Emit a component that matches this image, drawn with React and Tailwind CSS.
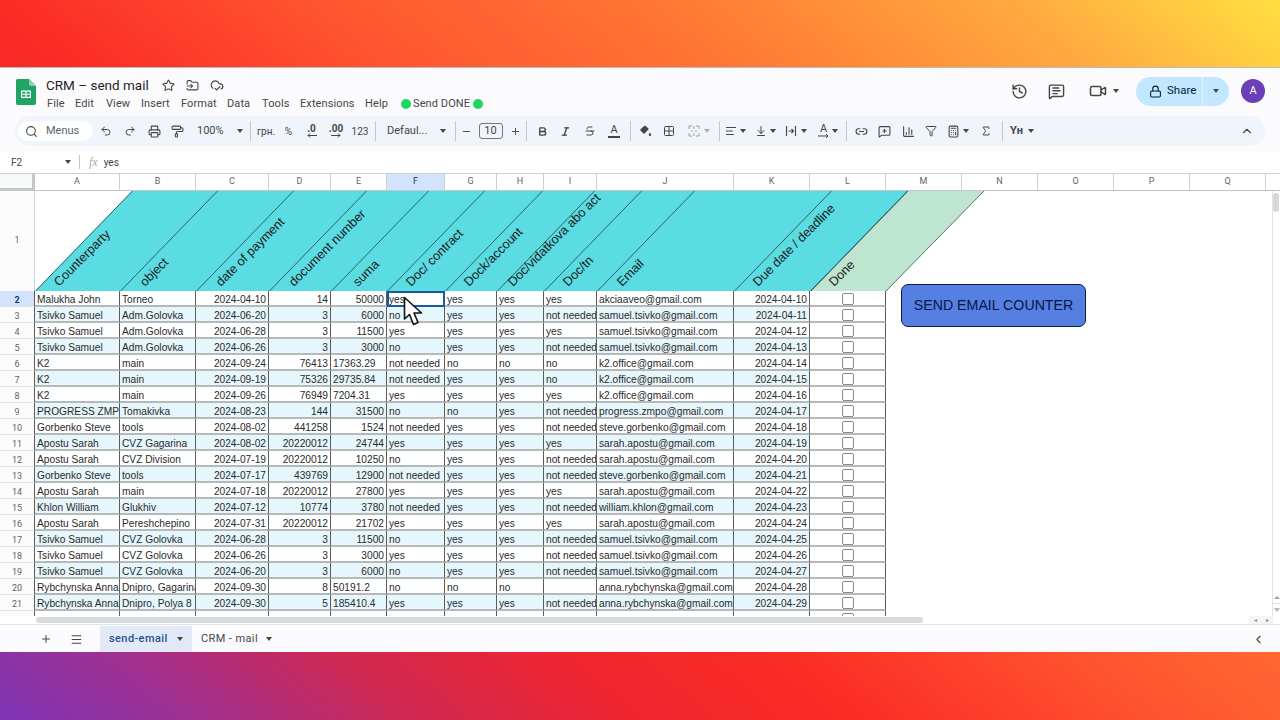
import React from "react";
import {
  Search, Undo2, Redo2, Printer, PaintRoller, Minus, Plus, Bold, Italic, Strikethrough,
  Grid2x2, AlignLeft, ArrowDownToLine, Link2, MessageSquarePlus, ChartColumn,
  Filter, Calculator, Sigma, ChevronUp, ChevronLeft, History, MessageSquareText, Video, Lock,
  Star, FolderInput, CloudCheck, Menu,
} from "lucide-react";

const sampleRows = [
  ["Malukha John", "Torneo", "2024-04-10", "14", "50000", "yes", "yes", "yes", "yes", "akciaaveo@gmail.com", "2024-04-10"],
  ["Tsivko Samuel", "Adm.Golovka", "2024-06-20", "3", "6000", "no", "yes", "yes", "not needed", "samuel.tsivko@gmail.com", "2024-04-11"],
  ["Tsivko Samuel", "Adm.Golovka", "2024-06-28", "3", "11500", "yes", "yes", "yes", "yes", "samuel.tsivko@gmail.com", "2024-04-12"],
  ["Tsivko Samuel", "Adm.Golovka", "2024-06-26", "3", "3000", "no", "yes", "yes", "not needed", "samuel.tsivko@gmail.com", "2024-04-13"],
  ["K2", "main", "2024-09-24", "76413", "17363.29", "not needed", "no", "no", "no", "k2.office@gmail.com", "2024-04-14"],
  ["K2", "main", "2024-09-19", "75326", "29735.84", "not needed", "yes", "yes", "no", "k2.office@gmail.com", "2024-04-15"],
  ["K2", "main", "2024-09-26", "76949", "7204.31", "yes", "yes", "yes", "yes", "k2.office@gmail.com", "2024-04-16"],
  ["PROGRESS ZMPO", "Tomakivka", "2024-08-23", "144", "31500", "no", "no", "yes", "not needed", "progress.zmpo@gmail.com", "2024-04-17"],
  ["Gorbenko Steve", "tools", "2024-08-02", "441258", "1524", "not needed", "yes", "yes", "not needed", "steve.gorbenko@gmail.com", "2024-04-18"],
  ["Apostu Sarah", "CVZ Gagarina", "2024-08-02", "20220012", "24744", "yes", "yes", "yes", "yes", "sarah.apostu@gmail.com", "2024-04-19"],
  ["Apostu Sarah", "CVZ Division", "2024-07-19", "20220012", "10250", "no", "yes", "yes", "not needed", "sarah.apostu@gmail.com", "2024-04-20"],
  ["Gorbenko Steve", "tools", "2024-07-17", "439769", "12900", "not needed", "yes", "yes", "not needed", "steve.gorbenko@gmail.com", "2024-04-21"],
  ["Apostu Sarah", "main", "2024-07-18", "20220012", "27800", "yes", "yes", "yes", "yes", "sarah.apostu@gmail.com", "2024-04-22"],
  ["Khlon William", "Glukhiv", "2024-07-12", "10774", "3780", "not needed", "yes", "yes", "not needed", "william.khlon@gmail.com", "2024-04-23"],
  ["Apostu Sarah", "Pereshchepino", "2024-07-31", "20220012", "21702", "yes", "yes", "yes", "yes", "sarah.apostu@gmail.com", "2024-04-24"],
  ["Tsivko Samuel", "CVZ Golovka", "2024-06-28", "3", "11500", "no", "yes", "yes", "not needed", "samuel.tsivko@gmail.com", "2024-04-25"],
  ["Tsivko Samuel", "CVZ Golovka", "2024-06-26", "3", "3000", "yes", "yes", "yes", "not needed", "samuel.tsivko@gmail.com", "2024-04-26"],
  ["Tsivko Samuel", "CVZ Golovka", "2024-06-20", "3", "6000", "no", "yes", "yes", "not needed", "samuel.tsivko@gmail.com", "2024-04-27"],
  ["Rybchynska Anna", "Dnipro, Gagarina", "2024-09-30", "8", "50191.2", "no", "no", "no", "", "anna.rybchynska@gmail.com", "2024-04-28"],
  ["Rybchynska Anna", "Dnipro, Polya 8", "2024-09-30", "5", "185410.4", "yes", "yes", "yes", "not needed", "anna.rybchynska@gmail.com", "2024-04-29"],
  ["", "", "", "", "", "", "", "", "", "", ""],
];

const columnLetters = ["A", "B", "C", "D", "E", "F", "G", "H", "I", "J", "K", "L", "M", "N", "O", "P", "Q"];

// offsets of the slanted header cells, measured from the left of column A
const slantCols = [
  { x: 0, label: "Counterparty", dx: 24 },
  { x: 85, label: "object", dx: 25 },
  { x: 161, label: "date of payment", dx: 25 },
  { x: 234, label: "document number", dx: 25 },
  { x: 296, label: "suma", dx: 27 },
  { x: 352, label: "Doc/ contract", dx: 24 },
  { x: 410, label: "Dock/account", dx: 24 },
  { x: 462, label: "Doc/vidatkova abo act", dx: 16 },
  { x: 509, label: "Doc/tn", dx: 24 },
  { x: 562, label: "Email", dx: 25 },
  { x: 699, label: "Due date / deadline", dx: 24 },
  { x: 775, label: "Done", dx: 24 },
];

function Caret({ className = "" }) {
  return <span className={"inline-block shrink-0 w-0 h-0 border-x-[3px] border-x-transparent border-t-[4px] border-t-[#444746] " + className} />;
}

function Sep({ className = "" }) {
  return (
    <div className={"flex justify-center " + className}>
      <div className="w-px h-5 bg-[#c7c7c7]" />
    </div>
  );
}

function Tool({ className = "", children }) {
  return <div className={"flex items-center justify-center h-full text-[#444746] " + className}>{children}</div>;
}

function SheetsLogo() {
  return (
    <svg width="20" height="26" viewBox="0 0 20 26" className="shrink-0">
      <path d="M2 0h11l7 7v17a2 2 0 0 1-2 2H2a2 2 0 0 1-2-2V2a2 2 0 0 1 2-2z" fill="#1fa463" />
      <path d="M13 0l7 7h-5a2 2 0 0 1-2-2z" fill="#8ed1b1" />
      <path d="M5 11.5h10v7.5H5z M6.2 12.7v2h3.2v-2z M10.6 12.7v2h3.2v-2z M6.2 15.8v2h3.2v-2z M10.6 15.8v2h3.2v-2z" fill="#fff" fillRule="evenodd" />
    </svg>
  );
}

function MergeIcon() {
  return (
    <svg width="12" height="12" viewBox="0 0 12 12" fill="none" stroke="#9aa0a6" strokeWidth="1">
      <path d="M1 4V1h3 M8 1h3v3 M1 8v3h3 M8 11h3V8 M6 1v3 M6 8v3 M3 6h2 M7 6h2" />
    </svg>
  );
}

function WrapIcon() {
  return (
    <svg width="12" height="12" viewBox="0 0 12 12" fill="none" stroke="#444746" strokeWidth="1.1">
      <path d="M1.5 1v10 M10.5 1v10 M3.5 6h5 M6.5 4l2 2-2 2" />
    </svg>
  );
}

function RotateIcon() {
  return (
    <div className="flex flex-col items-center leading-[10px]">
      <span className="text-[11px]">A</span>
      <svg width="11" height="4" viewBox="0 0 11 4" fill="none" stroke="#444746" strokeWidth="1">
        <path d="M0 2h10 M8 0l2 2-2 2" />
      </svg>
    </div>
  );
}

function FillIcon() {
  return (
    <svg width="13" height="13" viewBox="0 0 13 13" fill="#444746">
      <path d="M5.5 1.2l.8-.8 1 1L9.9 4 5.6 8.6a.8.8 0 0 1-1.1 0L1.4 5.5a.8.8 0 0 1 0-1.1L4.7 1.2z" />
      <path d="M11 7.5c.6.9 1.2 1.6 1.2 2.3a1.2 1.2 0 0 1-2.4 0c0-.7.6-1.4 1.2-2.3z" />
    </svg>
  );
}

function DecimalIcon({ text, right }) {
  return (
    <div className="flex flex-col items-center leading-[9px] font-bold text-[10px]">
      <span>{text}</span>
      <svg width="10" height="5" viewBox="0 0 10 5" fill="none" stroke="#444746" strokeWidth="1" className={right ? "" : "-scale-x-100"}>
        <path d="M0 2.5h9 M7 .5l2 2-2 2" />
      </svg>
    </div>
  );
}

function Header() {
  return (
    <div className="flex h-[48px] shrink-0 relative">
      <div className="pl-[16px] pt-[11px]">
        <SheetsLogo />
      </div>
      <div className="pl-[10px] pt-[8px] font-['Roboto',sans-serif]">
        <div className="flex items-center h-[18px]">
          <span className="text-[13.5px] text-[#1f1f1f] w-[116px]">CRM – send mail</span>
          <Star size={13} className="text-[#444746]" />
          <FolderInput size={13} className="text-[#444746] ml-[11px]" />
          <CloudCheck size={14} className="text-[#444746] ml-[11px]" />
        </div>
        <div className="flex items-center h-[18px] mt-[1px] ml-[1px] text-[11px] text-[#444746] tracking-[0.1px]">
          <span className="w-[28px]">File</span>
          <span className="w-[31px]">Edit</span>
          <span className="w-[35px]">View</span>
          <span className="w-[40px]">Insert</span>
          <span className="w-[46px]">Format</span>
          <span className="w-[35px]">Data</span>
          <span className="w-[38px]">Tools</span>
          <span className="w-[65px]">Extensions</span>
          <span className="w-[36px]">Help</span>
          <span className="w-[10px] h-[10px] rounded-full bg-[#1ed760]" />
          <span className="ml-[2px] w-[60px]">Send DONE</span>
          <span className="w-[10px] h-[10px] rounded-full bg-[#1ed760]" />
        </div>
      </div>
      <div className="ml-auto flex items-center pr-[15px] pb-[2px] font-['Roboto',sans-serif]">
        <History size={17} className="text-[#444746]" />
        <MessageSquareText size={17} className="text-[#444746] ml-[20px]" />
        <Video size={18} className="text-[#444746] ml-[24px]" />
        <Caret className="ml-[6px]" />
        <div className="flex items-center ml-[17px] h-[29px] w-[93px] rounded-full bg-[#c2e7ff] text-[#001d35]">
          <div className="flex items-center w-[67px] pl-[13px] gap-[5px] border-r border-[#e4f3fd] h-full">
            <Lock size={13} />
            <span className="text-[11.5px]">Share</span>
          </div>
          <Caret className="ml-[10px]" />
        </div>
        <div className="flex items-center justify-center ml-[12px] w-[24px] h-[24px] rounded-full bg-[#6b3fb5] text-white text-[11px]">A</div>
      </div>
    </div>
  );
}

function Toolbar() {
  return (
    <div className="flex items-center h-[30px] mx-[15px] pl-[3px] rounded-full bg-[#f0f4fb] shrink-0 font-['Roboto',sans-serif] text-[10px] text-[#444746]">
      <div className="flex items-center w-[75px] h-[20px] pl-[7px] gap-[8px] rounded-full bg-white">
        <Search size={13} />
        <span className="text-[11px] text-[#5f6368]">Menus</span>
      </div>
      <Tool className="w-[25px]"><Undo2 size={12} /></Tool>
      <Tool className="w-[24px]"><Redo2 size={12} /></Tool>
      <Tool className="w-[24px]"><Printer size={13} /></Tool>
      <Tool className="w-[23px]"><PaintRoller size={13} /></Tool>
      <Tool className="w-[57px] justify-start pl-[8px] text-[11px]">
        <span className="w-[40px]">100%</span>
        <Caret />
      </Tool>
      <Sep className="w-[8px]" />
      <Tool className="w-[24px]">грн.</Tool>
      <Tool className="w-[21px]">%</Tool>
      <Tool className="w-[25px]"><DecimalIcon text=".0" /></Tool>
      <Tool className="w-[24px]"><DecimalIcon text=".00" right /></Tool>
      <Tool className="w-[24px]">123</Tool>
      <Sep className="w-[6px]" />
      <Tool className="w-[72px] justify-start pl-[9px] text-[11px]">
        <span className="w-[53px]">Defaul...</span>
        <Caret />
      </Tool>
      <Sep className="w-[10px]" />
      <Tool className="w-[12px]"><Minus size={11} /></Tool>
      <Tool className="w-[37px]">
        <div className="flex items-center justify-center w-[24px] h-[16px] border border-[#747775] rounded-[3px] text-[11px]">10</div>
      </Tool>
      <Tool className="w-[12px]"><Plus size={11} /></Tool>
      <Sep className="w-[10px]" />
      <Tool className="w-[22px]"><Bold size={11} strokeWidth={3} /></Tool>
      <Tool className="w-[24px]"><Italic size={11} strokeWidth={3} /></Tool>
      <Tool className="w-[25px]"><Strikethrough size={12} /></Tool>
      <Tool className="w-[24px]">
        <span className="border-b-2 border-[#444746] px-[2px] leading-[12px] text-[11px]">A</span>
      </Tool>
      <Sep className="w-[8px]" />
      <Tool className="w-[23px]"><FillIcon /></Tool>
      <Tool className="w-[24px]"><Grid2x2 size={12} /></Tool>
      <Tool className="w-[34px] justify-start pl-[7px] gap-[4px]">
        <MergeIcon />
        <Caret className="opacity-40" />
      </Tool>
      <Sep className="w-[8px]" />
      <Tool className="w-[27px] justify-start gap-[3px] pl-[2px]"><AlignLeft size={12} /><Caret /></Tool>
      <Tool className="w-[31px] justify-start gap-[3px] pl-[5px]"><ArrowDownToLine size={12} /><Caret /></Tool>
      <Tool className="w-[31px] justify-start gap-[4px] pl-[4px]"><WrapIcon /><Caret /></Tool>
      <Tool className="w-[30px] justify-start gap-[3px] pl-[6px]"><RotateIcon /><Caret /></Tool>
      <Sep className="w-[8px]" />
      <Tool className="w-[22px]"><Link2 size={13} /></Tool>
      <Tool className="w-[24px]"><MessageSquarePlus size={13} /></Tool>
      <Tool className="w-[24px]"><ChartColumn size={13} /></Tool>
      <Tool className="w-[22px]"><Filter size={12} /></Tool>
      <Tool className="w-[32px] justify-start gap-[3px] pl-[5px]"><Calculator size={13} /><Caret /></Tool>
      <Tool className="w-[24px]"><Sigma size={12} /></Tool>
      <Sep className="w-[8px]" />
      <Tool className="w-[34px] justify-start gap-[4px] pl-[4px]"><span className="text-[11px] font-bold w-[14px]">Yн</span><Caret /></Tool>
      <div className="ml-auto pr-[11px]"><ChevronUp size={14} /></div>
    </div>
  );
}

function FormulaBar() {
  return (
    <div className="flex items-center h-[21px] mt-[6px] pb-[1px] shrink-0 font-['Roboto',sans-serif] text-[10px] text-[#444746] bg-white">
      <span className="ml-[11px] w-[54px]">F2</span>
      <Caret />
      <div className="w-px h-[14px] bg-[#c7c7c7] ml-[8px]" />
      <span className="ml-[9px] italic font-['Liberation_Serif',serif] text-[#aaa] text-[12px]">fx</span>
      <span className="ml-[6px]">yes</span>
    </div>
  );
}

const colTemplate = "grid grid-cols-[85px_76px_73px_62px_56px_58px_52px_47px_53px_137px_76px_76px_76px_76px_76px_76px_76px]";
const rowTemplate = "grid grid-cols-[85px_76px_73px_62px_56px_58px_52px_47px_53px_137px_76px_76px]";

function ColumnHeaders() {
  return (
    <div className="flex h-[18px] shrink-0 border-t border-[#d0d0d0] bg-white font-['Roboto',sans-serif] text-[9px] text-[#5f6368]">
      <div className="w-[35px] border-r-[3px] border-b-[3px] border-[#c4c7c5] bg-[#f8f9fa]" />
      <div className={colTemplate + " border-b border-[#c4c7c5] flex-1"}>
        {columnLetters.map((letter) => (
          <div
            key={letter}
            className={"flex items-center justify-center border-r border-[#d0d0d0] " + (letter === "F" ? "bg-[#d3e3fd] text-[#333]" : "")}
          >
            {letter}
          </div>
        ))}
      </div>
    </div>
  );
}

function SlantedHeader() {
  const bottom = 100;
  const run = 97;
  return (
    <svg width="1231" height="100" className="block shrink-0">
      <polygon points={`0,${bottom} ${run},0 873,0 776,${bottom}`} fill="#5bdbe2" />
      <polygon points={`775,${bottom} 873,0 949,0 851,${bottom}`} fill="#bde5d0" />
      {slantCols.map((c) => (
        <line key={c.x} x1={c.x + 0.5} y1={bottom} x2={c.x + run + 0.5} y2="0" stroke="#2f6468" strokeWidth="1" />
      ))}
      <line x1="873" y1="0" x2="776" y2={bottom} stroke="#2f6468" strokeWidth="1" />
      <line x1="949" y1="0" x2="851" y2={bottom} stroke="#4d7a66" strokeWidth="1" />
      {slantCols.map((c) => (
        <text
          key={c.label}
          x={c.x + c.dx}
          y="96"
          transform={`rotate(-45 ${c.x + c.dx} 96)`}
          fontFamily="'Liberation Sans', sans-serif"
          fontSize="12.7"
          fill="#1c1c1c"
        >
          {c.label}
        </text>
      ))}
    </svg>
  );
}

function isNumeric(i, v) {
  if (i === 2 || i === 3 || i === 10) return true;
  if (i === 4) return !v.includes(".");
  return false;
}

function DataRow({ number, cells }) {
  const tint = number % 2 === 1 ? "bg-[#e6f6fd]" : "bg-white";
  const active = number === 2;
  return (
    <div className="flex h-[16px] font-['Liberation_Sans',sans-serif] text-[10.2px] leading-[14px] text-[#2a2a2a]">
      <div className={"flex items-center justify-center w-[35px] pt-[2px] border-r border-[#5c5c5c] border-b border-b-[#e4e4e4] text-[9px] font-['Roboto',sans-serif] " + (active ? "bg-[#d3e3fd] font-bold text-[#1f3a70]" : "bg-[#fcfcfc] text-[#5f6368]")}>
        {number}
      </div>
      <div className={rowTemplate}>
        {cells.map((value, i) => (
          <div
            key={i}
            className={
              "flex items-start overflow-hidden whitespace-nowrap pt-[2px] px-[2px] border-r border-r-[#5c5c5c] border-b-2 border-b-[#b5b9b9] " +
              (active && i === 5 ? "bg-white outline-2 -outline-offset-2 outline-[#1a5a9c] " : tint + " ") +
              (isNumeric(i, value) ? "justify-end" : "justify-start")
            }
          >
            {value}
          </div>
        ))}
        <div className="flex justify-center border-r border-r-[#5c5c5c] border-b-2 border-b-[#b5b9b9] bg-white">
          <div className="w-[12px] h-[12px] mt-[2px] rounded-[2px] border border-[#8a8a8a] bg-white" />
        </div>
      </div>
    </div>
  );
}

function SheetBody() {
  return (
    <div className="relative flex-1 min-h-0 overflow-hidden bg-white">
      <div className="flex">
        <div className="flex items-center justify-center w-[35px] h-[100px] bg-[#fcfcfc] border-r border-[#d0d0d0] font-['Roboto',sans-serif] text-[9px] text-[#5f6368]">1</div>
        <SlantedHeader />
      </div>
      {sampleRows.map((cells, i) => (
        <DataRow key={i} number={i + 2} cells={cells} />
      ))}

      {/* button drawing floating over the sheet */}
      <div className="absolute left-[901px] top-[93px] flex items-center justify-center w-[185px] h-[43px] rounded-[7px] border border-[#101c50] bg-[#5580e2] font-['Liberation_Sans',sans-serif] text-[14.2px] text-[#0b1547]">
        SEND EMAIL COUNTER
      </div>

      <svg width="22" height="32" viewBox="0 0 22 32" className="absolute left-[403px] top-[105px]">
        <path d="M1.5 1.5 L1.5 23 L6.5 18.5 L10.5 28.5 L15 26.5 L11 17 L18.5 17 Z" fill="#fff" stroke="#111" strokeWidth="1.6" strokeLinejoin="round" />
      </svg>

      <div className="absolute right-0 top-0 bottom-0 w-[8px] bg-white border-l border-[#e3e3e3]">
        <div className="absolute left-0 top-[2px] w-[6px] h-[19px] rounded-full bg-[#d5d7da]" />
        <div className="absolute left-0 bottom-0 flex flex-col">
          <div className="flex items-center justify-center w-[7px] h-[12px] border-b border-[#e3e3e3]">
            <span className="w-0 h-0 border-x-[3px] border-x-transparent border-b-[3px] border-b-[#9aa0a6]" />
          </div>
          <div className="flex items-center justify-center w-[7px] h-[12px]">
            <Caret className="opacity-40" />
          </div>
        </div>
      </div>
    </div>
  );
}

function HScroll() {
  return (
    <div className="relative h-[9px] shrink-0 bg-white border-b border-[#e3e3e3]">
      <div className="absolute left-[36px] top-[1px] w-[887px] h-[6px] rounded-full bg-[#d8dadd]" />
      <div className="absolute right-[7px] top-0 flex text-[#888] text-[6px] leading-[8px]">
        <span className="w-[12px] text-center bg-[#f4f4f4]">◂</span>
        <span className="w-[12px] text-center bg-[#f4f4f4]">▸</span>
      </div>
    </div>
  );
}

function TabBar() {
  return (
    <div className="flex items-stretch h-[27px] pt-[1px] shrink-0 font-['Roboto',sans-serif] text-[11px] tracking-[0.4px] text-[#444746]">
      <div className="flex items-center w-[100px] pl-[40px] gap-[18px]">
        <Plus size={12} />
        <Menu size={13} />
      </div>
      <div className="flex items-center w-[92px] pl-[9px] bg-[#e1e9f7] text-[#27528f] font-medium">
        <span className="w-[68px]">send-email</span>
        <Caret className="border-t-[#27528f]" />
      </div>
      <div className="flex items-center pl-[9px]">
        <span className="w-[65px]">CRM - mail</span>
        <Caret />
      </div>
      <div className="ml-auto flex items-center pr-[15px]">
        <ChevronLeft size={13} />
      </div>
    </div>
  );
}

export default function App() {
  return (
    <div className="flex flex-col w-[1280px] h-[720px] overflow-hidden bg-[linear-gradient(40deg,#7d35b5_0%,#a03090_9.4%,#d02850_19.6%,#f0252f_30%,#fb2c24_40%,#ff5530_55%,#ff7532_70%,#ffa840_87%,#ffe040_100%)]">
      <div className="h-[67px] shrink-0" />
      <div className="flex flex-col h-[585px] bg-[#fbfbfe] border-t border-[#00000040]">
        <Header />
        <Toolbar />
        <FormulaBar />
        <ColumnHeaders />
        <SheetBody />
        <HScroll />
        <TabBar />
      </div>
    </div>
  );
}
